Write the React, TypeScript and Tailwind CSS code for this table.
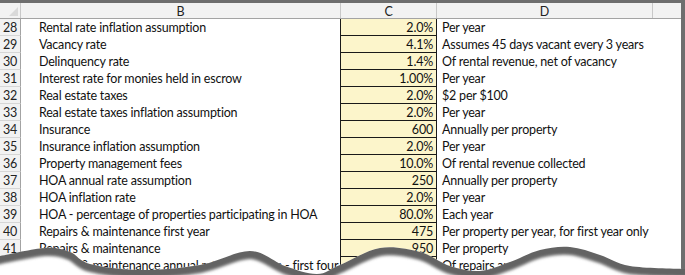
import React from "react";

type Row = { n: number; label: string; value: string; note: string };

const rows: Row[] = [
  { n: 28, label: "Rental rate inflation assumption", value: "2.0%", note: "Per year" },
  { n: 29, label: "Vacancy rate", value: "4.1%", note: "Assumes 45 days vacant every 3 years" },
  { n: 30, label: "Delinquency rate", value: "1.4%", note: "Of rental revenue, net of vacancy" },
  { n: 31, label: "Interest rate for monies held in escrow", value: "1.00%", note: "Per year" },
  { n: 32, label: "Real estate taxes", value: "2.0%", note: "$2 per $100" },
  { n: 33, label: "Real estate taxes inflation assumption", value: "2.0%", note: "Per year" },
  { n: 34, label: "Insurance", value: "600", note: "Annually per property" },
  { n: 35, label: "Insurance inflation assumption", value: "2.0%", note: "Per year" },
  { n: 36, label: "Property management fees", value: "10.0%", note: "Of rental revenue collected" },
  { n: 37, label: "HOA annual rate assumption", value: "250", note: "Annually per property" },
  { n: 38, label: "HOA inflation rate", value: "2.0%", note: "Per year" },
  { n: 39, label: "HOA - percentage of properties participating in HOA", value: "80.0%", note: "Each year" },
  { n: 40, label: "Repairs & maintenance first year", value: "475", note: "Per property per year, for first year only" },
  { n: 41, label: "Repairs & maintenance", value: "950", note: "Per property" },
  { n: 42, label: "Repairs & maintenance annual rate of inflation - first four years", value: "2.0%", note: "Of repairs and maintenance" },
  { n: 43, label: "", value: "", note: "" },
];

// torn edge of the sheet, x/y in page pixels
const edge: [number, number][] = [
  [-10, 258], [0, 256], [45, 248], [70, 252], [90, 264], [140, 270], [200, 265],
  [250, 251], [285, 266], [317, 274], [340, 265], [380, 248], [420, 252],
  [450, 266], [480, 271], [510, 262], [540, 250], [570, 247], [600, 255],
  [630, 266], [685, 269], [700, 269],
];

function smooth(pts: [number, number][]) {
  let d = `M${pts[0][0]},${pts[0][1]}`;
  for (let i = 0; i < pts.length - 1; i++) {
    const p0 = pts[Math.max(i - 1, 0)];
    const p1 = pts[i];
    const p2 = pts[i + 1];
    const p3 = pts[Math.min(i + 2, pts.length - 1)];
    const c1x = p1[0] + (p2[0] - p0[0]) / 6;
    const c1y = p1[1] + (p2[1] - p0[1]) / 6;
    const c2x = p2[0] - (p3[0] - p1[0]) / 6;
    const c2y = p2[1] - (p3[1] - p1[1]) / 6;
    d += ` C${c1x},${c1y} ${c2x},${c2y} ${p2[0]},${p2[1]}`;
  }
  return d;
}

function TornEdge() {
  const line = smooth(edge);
  const below = `${line} L700,300 L-10,300 Z`;
  return (
    <svg
      className="absolute left-0 top-[215px]"
      width={685}
      height={60}
      viewBox="0 215 685 60"
    >
      <defs>
        <filter id="soft" x="-10%" y="-50%" width="120%" height="200%">
          <feGaussianBlur stdDeviation="1.8" />
        </filter>
        <clipPath id="below">
          <path d={below} />
        </clipPath>
      </defs>
      <path d={below} fill="#ffffff" />
      <g clipPath="url(#below)">
        <path
          d={line}
          fill="none"
          stroke="#636363"
          strokeWidth={12}
          filter="url(#soft)"
          transform="translate(0,2)"
        />
      </g>
    </svg>
  );
}

export default function App() {
  return (
    <div
      className="relative w-[685px] h-[275px] overflow-hidden bg-white text-[#111] text-[12.5px] tracking-[-0.2px] leading-[16px]"
      style={{ fontFamily: "Lato, 'Liberation Sans', sans-serif" }}
    >
      <div className="border-t-[3px] border-r-4 border-[#6e6e6e] h-[275px]">
        {/* column headers */}
        <div className="flex h-[16px] leading-[15px] bg-[#f2f2f2] border-b border-[#a3a3a3] text-[#222]">
          <div className="relative w-[21px] border-r border-[#c8c8c8]">
            <div className="absolute right-[2px] bottom-[2px] w-0 h-0 border-l-[9px] border-l-transparent border-b-[9px] border-b-[#d9d9d9]" />
          </div>
          <div className="w-[319px] text-center pt-px">B</div>
          <div className="w-[97px] border-l border-r border-[#c8c8c8] text-center pt-px">C</div>
          <div className="w-[216px] border-r border-[#c8c8c8] text-center pt-px">D</div>
          <div className="flex-1" />
        </div>

        {rows.map((r) => (
          <div key={r.n} className="flex h-[17px]">
            <div className="w-[21px] bg-[#f2f2f2] border-r border-b border-r-[#a3a3a3] border-b-[#d6d6d6] text-center pt-px text-[#222]">
              {r.n}
            </div>
            <div className="w-[319px] pl-[18px] pt-px whitespace-nowrap overflow-hidden">
              {r.label}
            </div>
            <div className="w-[97px] bg-[#fcf5cb] border-l border-r border-b border-[#1a1a1a] text-right pr-[3px] pt-px overflow-hidden">
              {r.value}
            </div>
            <div className="w-[216px] pl-[5px] pt-px whitespace-nowrap">
              {r.note}
            </div>
            <div className="flex-1" />
          </div>
        ))}
      </div>
      <TornEdge />
    </div>
  );
}
